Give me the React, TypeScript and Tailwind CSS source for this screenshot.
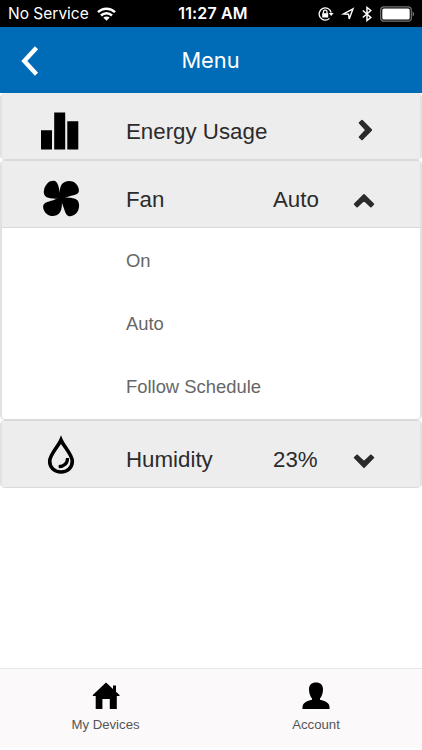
import { useState } from "react";
import type { ReactNode } from "react";
import clsx from "clsx";

const fanOptions = ["On", "Auto", "Follow Schedule"];

function StatusBar() {
  return (
    <div className="h-[27px] bg-black text-white flex items-center justify-between pl-[8px] pr-[7px] font-['Inter','Liberation_Sans',sans-serif]">
      <div className="w-[150px] flex items-center gap-[8px]">
        <span className="text-[15.5px] leading-[27px] whitespace-nowrap w-[81px]">
          No Service
        </span>
        <svg width="19" height="14" viewBox="0 0 19 14" fill="none" stroke="white" strokeWidth="2.5">
          <path d="M1 5.2C5.7.6 13.3.6 18 5.2" />
          <path d="M4 8.5c3.1-3 7.9-3 11 0" />
          <path d="M9.5 13.7 6.3 10.5c1.7-1.5 4.7-1.5 6.4 0z" fill="white" stroke="none" />
        </svg>
      </div>
      <span className="text-[16px] leading-[27px] font-semibold tracking-[0.15px] whitespace-nowrap pl-[3px]">
        11:27 AM
      </span>
      <div className="w-[150px] flex items-center justify-end">
        {/* Rotation lock */}
        <svg width="16" height="14" viewBox="0 0 16 14" fill="none" stroke="white" strokeWidth="1.3">
          <path d="M13.2 5.5A6.1 6.1 0 1 0 11.5 11.4" />
          <path d="M10.8 6.1h4.8l-2.4 3z" fill="white" stroke="none" />
          <rect x="4.2" y="6.2" width="6" height="4.3" fill="white" stroke="none" />
          <path d="M5.4 6.5V5a1.8 1.8 0 0 1 3.6 0v1.5" />
        </svg>
        {/* Location */}
        <svg className="ml-[7px]" width="14" height="14" viewBox="0 0 14 14" fill="none" stroke="white" strokeWidth="1.4">
          <path d="M12 1.8 2.5 7l5 .2.7 4.8z" />
        </svg>
        {/* Bluetooth */}
        <svg className="ml-[7px]" width="10" height="16" viewBox="0 0 10 16" fill="none" stroke="white" strokeWidth="1.5">
          <path d="M.8 4.5l8 7L5 14.5V1.5l3.8 3-8 7" />
        </svg>
        {/* Battery */}
        <svg className="ml-[8px]" width="35" height="16" viewBox="0 0 35 16" fill="none">
          <rect x=".7" y=".9" width="30.6" height="14.2" rx="3.2" stroke="#777" strokeWidth="1.2" />
          <rect x="2.3" y="2.6" width="27.4" height="10.8" rx="1.5" fill="white" />
          <path d="M32.6 5.5c2 .8 2 4.2 0 5z" fill="#777" />
        </svg>
      </div>
    </div>
  );
}

function BarsIcon() {
  return (
    <svg width="40" height="40" viewBox="0 0 40 40">
      <path d="M1 19.3h11v19.2H1zM14.2 1.5h11v37h-11zM27.3 10.3h11v28.2h-11z" />
    </svg>
  );
}

function FanIcon() {
  return (
    <svg width="40" height="40" viewBox="0 0 40 40">
      <path d="M21 18.500C19.500 13 19 6 16.500 3.200 14.500 1 10.500 1.500 7.500 4.200 4 8 3 13 4.500 16c2 3.700 8 3.700 17 3.700z" />
      <path d="M19.700 19C19.700 12 19.700 8 22 5 25.500 1 32 1 35.500 4.200 38.700 7.200 40 12 38 14.200 35.500 16.500 28 16.500 21.500 20.500z" />
      <path d="M21.500 18.500C28 18.200 35 18.500 37.700 21.500c2.500 4 1.500 10-2 13.300-3 2.900-7.500 3.400-9.200.7C24.500 33 23.500 26 20 20z" />
      <path d="M22 19.500C22 27 22 31 19.500 34c-3 3.900-9.500 4-13 .7C3.500 32 1.800 27 4.300 24.700 7.500 22 14 22 20 18z" />
    </svg>
  );
}

function DropIcon() {
  return (
    <svg width="40" height="40" viewBox="0 4 40 40" fill="none" stroke="black" className="overflow-visible">
      <path d="M21 5c-2.6 6.4-11.3 14.5-11.3 21.2C9.7 32.600 14.5 37 21 37s11.3-4.400 11.3-10.8C32.3 19.500 23.6 11.4 21 5z" strokeWidth="3.600" />
      <path d="M27.500 23c.2 5.300-3.500 8.400-8.800 8.600" strokeWidth="3.200" />
    </svg>
  );
}

const chevrons = {
  right: "M7.6 2 10 -.3 19.2 9 10 18.4 7.6 16.1 14 9z",
  up: "M12 5.900 21.3 15.2 18.9 17.5 12 11 5.1 17.5 2.7 15.2z",
  down: "M12 18 21.3 8.7 18.9 6.3 12 12.900 5.1 6.3 2.7 8.7z",
};

type RowProps = {
  icon: ReactNode;
  label: string;
  value?: string;
  chevron: keyof typeof chevrons;
  onClick?: () => void;
};

function Row({ icon, label, value, chevron, onClick }: RowProps) {
  return (
    <button
      onClick={onClick}
      className="w-full h-[66px] pt-[12px] flex items-center text-left text-[22.3px] leading-[26px] text-[#2b2b2b] bg-[#ededed]"
    >
      <span className="w-[124px] pl-[38px] -mt-[2px]">{icon}</span>
      <span className="w-[147px] whitespace-nowrap">{label}</span>
      <span className="w-[79px]">{value}</span>
      <svg
        width="22"
        height="22"
        viewBox="0 0 22 22"
        fill="#2b2b2b"
        stroke="#2b2b2b"
        strokeWidth="1.8"
        strokeLinejoin="round"
        className="overflow-visible"
      >
        <path d={chevrons[chevron]} />
      </svg>
    </button>
  );
}

function Panel({ children, className }: { children: ReactNode; className?: string }) {
  return (
    <section
      className={clsx(
        "shrink-0 border-x-2 border-y border-x-[#e1e1e1] border-y-[#d9d9d9] rounded-[5px] overflow-hidden bg-white",
        className
      )}
    >
      {children}
    </section>
  );
}

export default function App() {
  const [fanOpen, setFanOpen] = useState(true);

  return (
    <main className="w-[422px] h-[750px] flex flex-col bg-white overflow-hidden font-['Liberation_Sans',Arial,sans-serif]">
      <StatusBar />

      <header className="h-[66px] shrink-0 bg-[#006bb7] text-white grid grid-cols-[60px_1fr_60px] items-center">
        <button aria-label="Back" className="pl-[20px] pt-[2px]">
          <svg width="20" height="30" viewBox="0 0 20 30" fill="none" stroke="white" strokeWidth="4.4">
            <path d="M16.5 1.8 4.3 15l12.2 13.2" />
          </svg>
        </button>
        <h1 className="text-center text-[21.8px] pr-[1px] font-['Inter','Liberation_Sans',sans-serif]">Menu</h1>
      </header>

      <Panel className="border-t-0">
        <Row icon={<BarsIcon />} label="Energy Usage" chevron="right" />
      </Panel>

      <Panel>
        <Row
          icon={<FanIcon />}
          label="Fan"
          value="Auto"
          chevron={fanOpen ? "up" : "down"}
          onClick={() => setFanOpen(!fanOpen)}
        />
        {fanOpen && (
          <ul className="h-[192px] pt-[1px] border-t border-[#d9d9d9]">
            {fanOptions.map((option) => (
              <li key={option} className="h-[63.3px] pl-[124px] flex items-center text-[18.4px] text-[#666]">
                {option}
              </li>
            ))}
          </ul>
        )}
      </Panel>

      <Panel>
        <Row icon={<DropIcon />} label="Humidity" value="23%" chevron="down" />
      </Panel>

      <nav className="mt-auto mb-[2px] h-[80px] shrink-0 grid grid-cols-2 bg-[#fbf9fa] border-t border-[#e6e6e6] text-[13.2px] leading-[16px] text-[#555]">
        <a className="flex flex-col items-center pt-[13px] gap-[7px]">
          <svg width="28" height="28" viewBox="0 0 28 28">
            <path d="M14 .5l7 6.4V3.500h3v6.300l3.500 3.300v.9h-2.700V27h-7V17h-7.400v10H3.700V14H.8v-.9z" />
          </svg>
          My Devices
        </a>
        <a className="flex flex-col items-center pt-[13px] gap-[7px] pr-[1px]">
          <svg width="28" height="28" viewBox="0 0 28 28">
            <path d="M14 .5c4.500 0 7 2.500 7 6.700 0 3.800-1.200 7.300-3 9.300v1.200c5 1.300 9.500 2.800 9.500 7.500V27H.5v-1.800c0-4.700 4.500-6.200 9.500-7.500v-1.200C8.200 14.500 7 11 7 7.200 7 3 9.500.5 14 .5z" />
          </svg>
          Account
        </a>
      </nav>
    </main>
  );
}
